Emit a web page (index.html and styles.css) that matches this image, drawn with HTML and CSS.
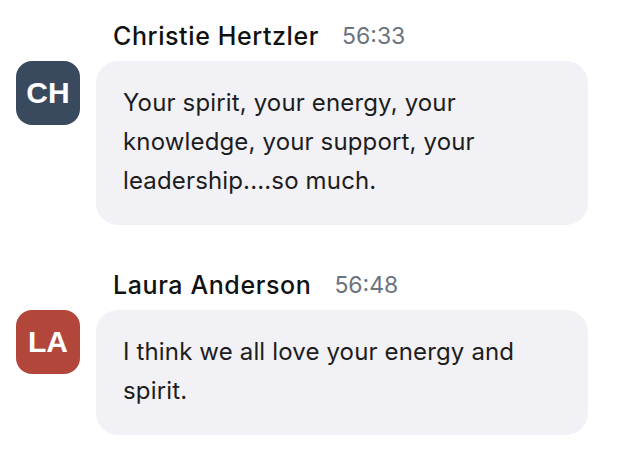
FILE: index.html
```html
<!DOCTYPE html>
<html lang="en">
<head>
    <meta charset="UTF-8">
    <title>Chat</title>
    <link rel="stylesheet" href="styles.css">
</head>
<body>
    <div class="chat">
        <div class="message">
            <div class="avatar avatar-ch">CH</div>
            <div class="content">
                <div class="header">
                    <span class="name">Christie Hertzler</span>
                    <span class="time">56:33</span>
                </div>
                <div class="bubble">Your spirit, your energy, your knowledge, your support, your leadership....so much.</div>
            </div>
        </div>

        <div class="message">
            <div class="avatar avatar-la">LA</div>
            <div class="content">
                <div class="header">
                    <span class="name">Laura Anderson</span>
                    <span class="time">56:48</span>
                </div>
                <div class="bubble">I think we all love your energy and spirit.</div>
            </div>
        </div>
    </div>
</body>
</html>
```

FILE: styles.css
```css
body {
    margin: 0;
    background-color: #fff;
    font-family: Inter, "Noto Sans", sans-serif;
}

.chat {
    padding: 20px 16px;
    display: flex;
    flex-direction: column;
    gap: 44px;
}

.message {
    display: flex;
    gap: 16px;
}

.avatar {
    width: 64px;
    height: 64px;
    border-radius: 16px;
    flex-shrink: 0;
    display: flex;
    align-items: center;
    justify-content: center;
    color: #fff;
    font-family: "Liberation Sans", Arial, sans-serif;
    font-weight: bold;
    font-size: 30px;
    margin-top: 41px;
}

.avatar-ch {
    background-color: #394a5f;
}

.avatar-la {
    background-color: #b3463a;
}

.content {
    width: 492px;
}

.header {
    padding-left: 17px;
    line-height: 32px;
    margin-bottom: 9px;
    display: flex;
    gap: 23px;
}

.name {
    font-size: 25px;
    font-weight: 500;
    letter-spacing: 0.6px;
    color: #111;
}

.time {
    font-size: 23px;
    color: #6b7280;
}

.bubble {
    background-color: #f1f1f6;
    border-radius: 22px;
    padding: 22px 26px 25px 27px;
    font-size: 24px;
    letter-spacing: 0.15px;
    line-height: 39px;
    color: #1d1d20;
}
```
